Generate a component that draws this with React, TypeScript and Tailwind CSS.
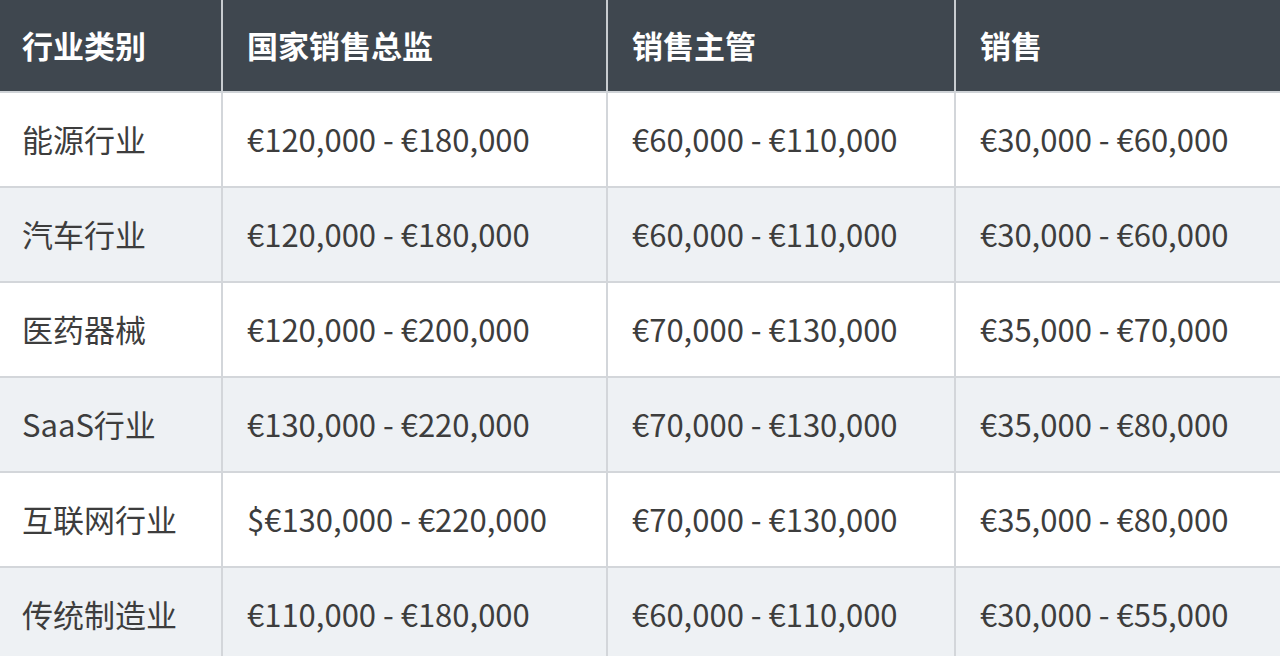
const rows = [
  ['能源行业', '€120,000 - €180,000', '€60,000 - €110,000', '€30,000 - €60,000'],
  ['汽车行业', '€120,000 - €180,000', '€60,000 - €110,000', '€30,000 - €60,000'],
  ['医药器械', '€120,000 - €200,000', '€70,000 - €130,000', '€35,000 - €70,000'],
  ['SaaS行业', '€130,000 - €220,000', '€70,000 - €130,000', '€35,000 - €80,000'],
  ['互联网行业', '$€130,000 - €220,000', '€70,000 - €130,000', '€35,000 - €80,000'],
  ['传统制造业', '€110,000 - €180,000', '€60,000 - €110,000', '€30,000 - €55,000'],
];

const headers = ['行业类别', '国家销售总监', '销售主管', '销售'];

export default function App() {
  return (
    <div
      className="w-[1280px] h-[656px] overflow-hidden bg-white"
      style={{ fontFamily: '"Noto Sans CJK SC", "Noto Sans", sans-serif' }}
    >
      <table className="w-[1280px] border-collapse table-fixed">
        <colgroup>
          <col className="w-[222px]" />
          <col className="w-[385px]" />
          <col className="w-[348px]" />
          <col className="w-[325px]" />
        </colgroup>
        <thead>
          <tr className="h-[92px] bg-[#3f474f]">
            {headers.map((h, i) => (
              <th
                key={h}
                className={`text-left font-bold text-white text-[31px] pl-6 border-b-2 border-b-[#cfd3d7] ${
                  i > 0 ? 'border-l-2 border-l-[#c8ccd0]' : ''
                }`}
              >
                <span className={i === 0 ? '-ml-[2px]' : ''}>{h}</span>
              </th>
            ))}
          </tr>
        </thead>
        <tbody>
          {rows.map((r, ri) => (
            <tr key={ri} className={`h-[95px] ${ri % 2 === 1 ? 'bg-[#eef1f4]' : 'bg-white'}`}>
              {r.map((c, ci) => (
                <td
                  key={ci}
                  className={`text-[31px] text-[#3d3d3d] pl-6 border-b-2 border-b-[#d3d6da] ${
                    ci > 0 ? 'border-l-2 border-l-[#d3d6da]' : ''
                  }`}
                >
                  <span className={ci === 0 ? '-ml-[2px]' : ''}>{c}</span>
                </td>
              ))}
            </tr>
          ))}
        </tbody>
      </table>
    </div>
  );
}
